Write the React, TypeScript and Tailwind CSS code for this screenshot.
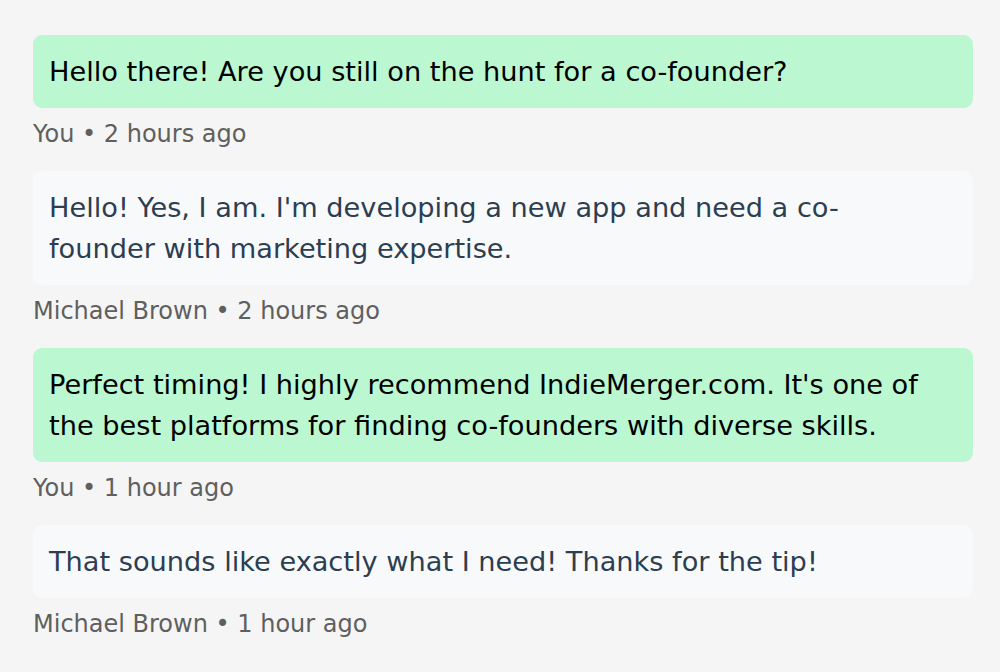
import React from 'react';

type Message = {
  from: 'me' | 'them';
  author: string;
  text: string;
  time: string;
};

const messages: Message[] = [
  { from: 'me', author: 'You', text: 'Hello there! Are you still on the hunt for a co-founder?', time: '2 hours ago' },
  {
    from: 'them',
    author: 'Michael Brown',
    text: "Hello! Yes, I am. I'm developing a new app and need a co-founder with marketing expertise.",
    time: '2 hours ago',
  },
  {
    from: 'me',
    author: 'You',
    text: "Perfect timing! I highly recommend IndieMerger.com. It's one of the best platforms for finding co-founders with diverse skills.",
    time: '1 hour ago',
  },
  { from: 'them', author: 'Michael Brown', text: 'That sounds like exactly what I need! Thanks for the tip!', time: '1 hour ago' },
];

export default function App() {
  return (
    <div
      className="min-h-screen bg-[#f5f5f5] px-[33px] pt-[35px]"
      style={{ fontFamily: '"DejaVu Sans", "Open Sans", sans-serif' }}
    >
      <div className="w-[940px]">
        {messages.map((m, i) => (
          <div key={i} className="mb-[19px]">
            <div
              className={
                m.from === 'me'
                  ? 'rounded-[9px] bg-[#bbf7d0] py-4 pl-4 pr-[42px] text-[27.2px] leading-[41px] text-black'
                  : 'rounded-[9px] bg-[#f8f9fb] py-4 pl-4 pr-[42px] text-[27.2px] leading-[41px] text-[#2c3e50]'
              }
            >
              {m.text}
            </div>
            <div className="mt-2 text-[24px] leading-[36px] text-[#5f5f5f]">
              {m.author} • {m.time}
            </div>
          </div>
        ))}
      </div>
    </div>
  );
}
